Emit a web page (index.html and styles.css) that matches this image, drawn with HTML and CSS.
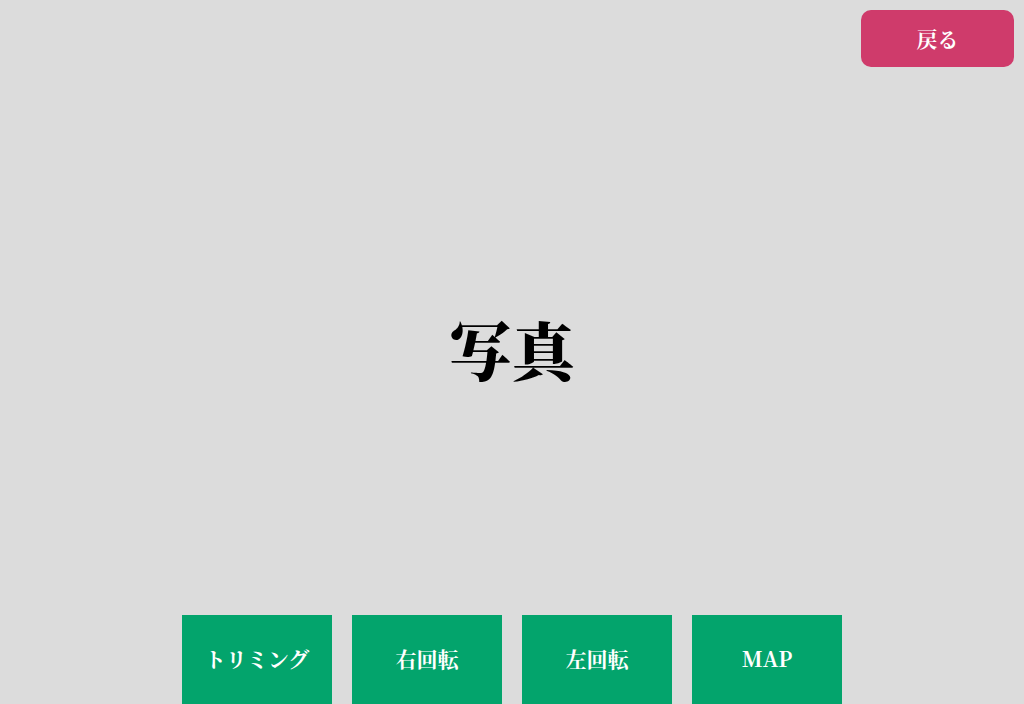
FILE: index.html
```html
<!DOCTYPE html>
<html lang="ja">
<head>
<meta charset="utf-8">
<meta name="viewport" content="width=device-width, initial-scale=1">
<title>写真</title>
<link rel="stylesheet" href="styles.css">
</head>
<body class="viewer">
<header class="viewer-header">
<button type="button" class="button button-back">戻る</button>
</header>
<main class="viewer-main">
<h1 class="photo-title">写真</h1>
</main>
<nav class="toolbar" aria-label="写真の操作">
<button type="button" class="button button-tool">トリミング</button>
<button type="button" class="button button-tool">右回転</button>
<button type="button" class="button button-tool">左回転</button>
<button type="button" class="button button-tool">MAP</button>
</nav>
</body>
</html>
```

FILE: styles.css
```css
* {
  box-sizing: border-box;
}

.viewer {
  display: flex;
  flex-direction: column;
  min-height: 100vh;
  margin: 0;
  background: #dcdcdc;
  color: #000;
  font-family: "Noto Serif CJK JP", "Liberation Serif", "Noto Sans CJK JP", serif;
}

.viewer-header {
  display: flex;
  justify-content: flex-end;
  padding: 10px;
}

.viewer-main {
  display: flex;
  flex: 1;
  align-items: center;
  justify-content: center;
  padding-top: 4px;
}

.photo-title {
  margin: 0;
  font-size: 63px;
  font-weight: 900;
  line-height: 80px;
}

.button {
  border: 0;
  color: #fff;
  font-family: inherit;
  font-size: 21px;
  font-weight: 700;
  line-height: 29px;
  cursor: pointer;
}

.button-back {
  min-width: 153px;
  padding: 14px 20px;
  border-radius: 10px;
  background: #cf3b6b;
}

.toolbar {
  display: flex;
  justify-content: center;
  gap: 20px;
}

.button-tool {
  width: 150px;
  padding: 29px 8px 31px;
  background: #03a46c;
}
```
